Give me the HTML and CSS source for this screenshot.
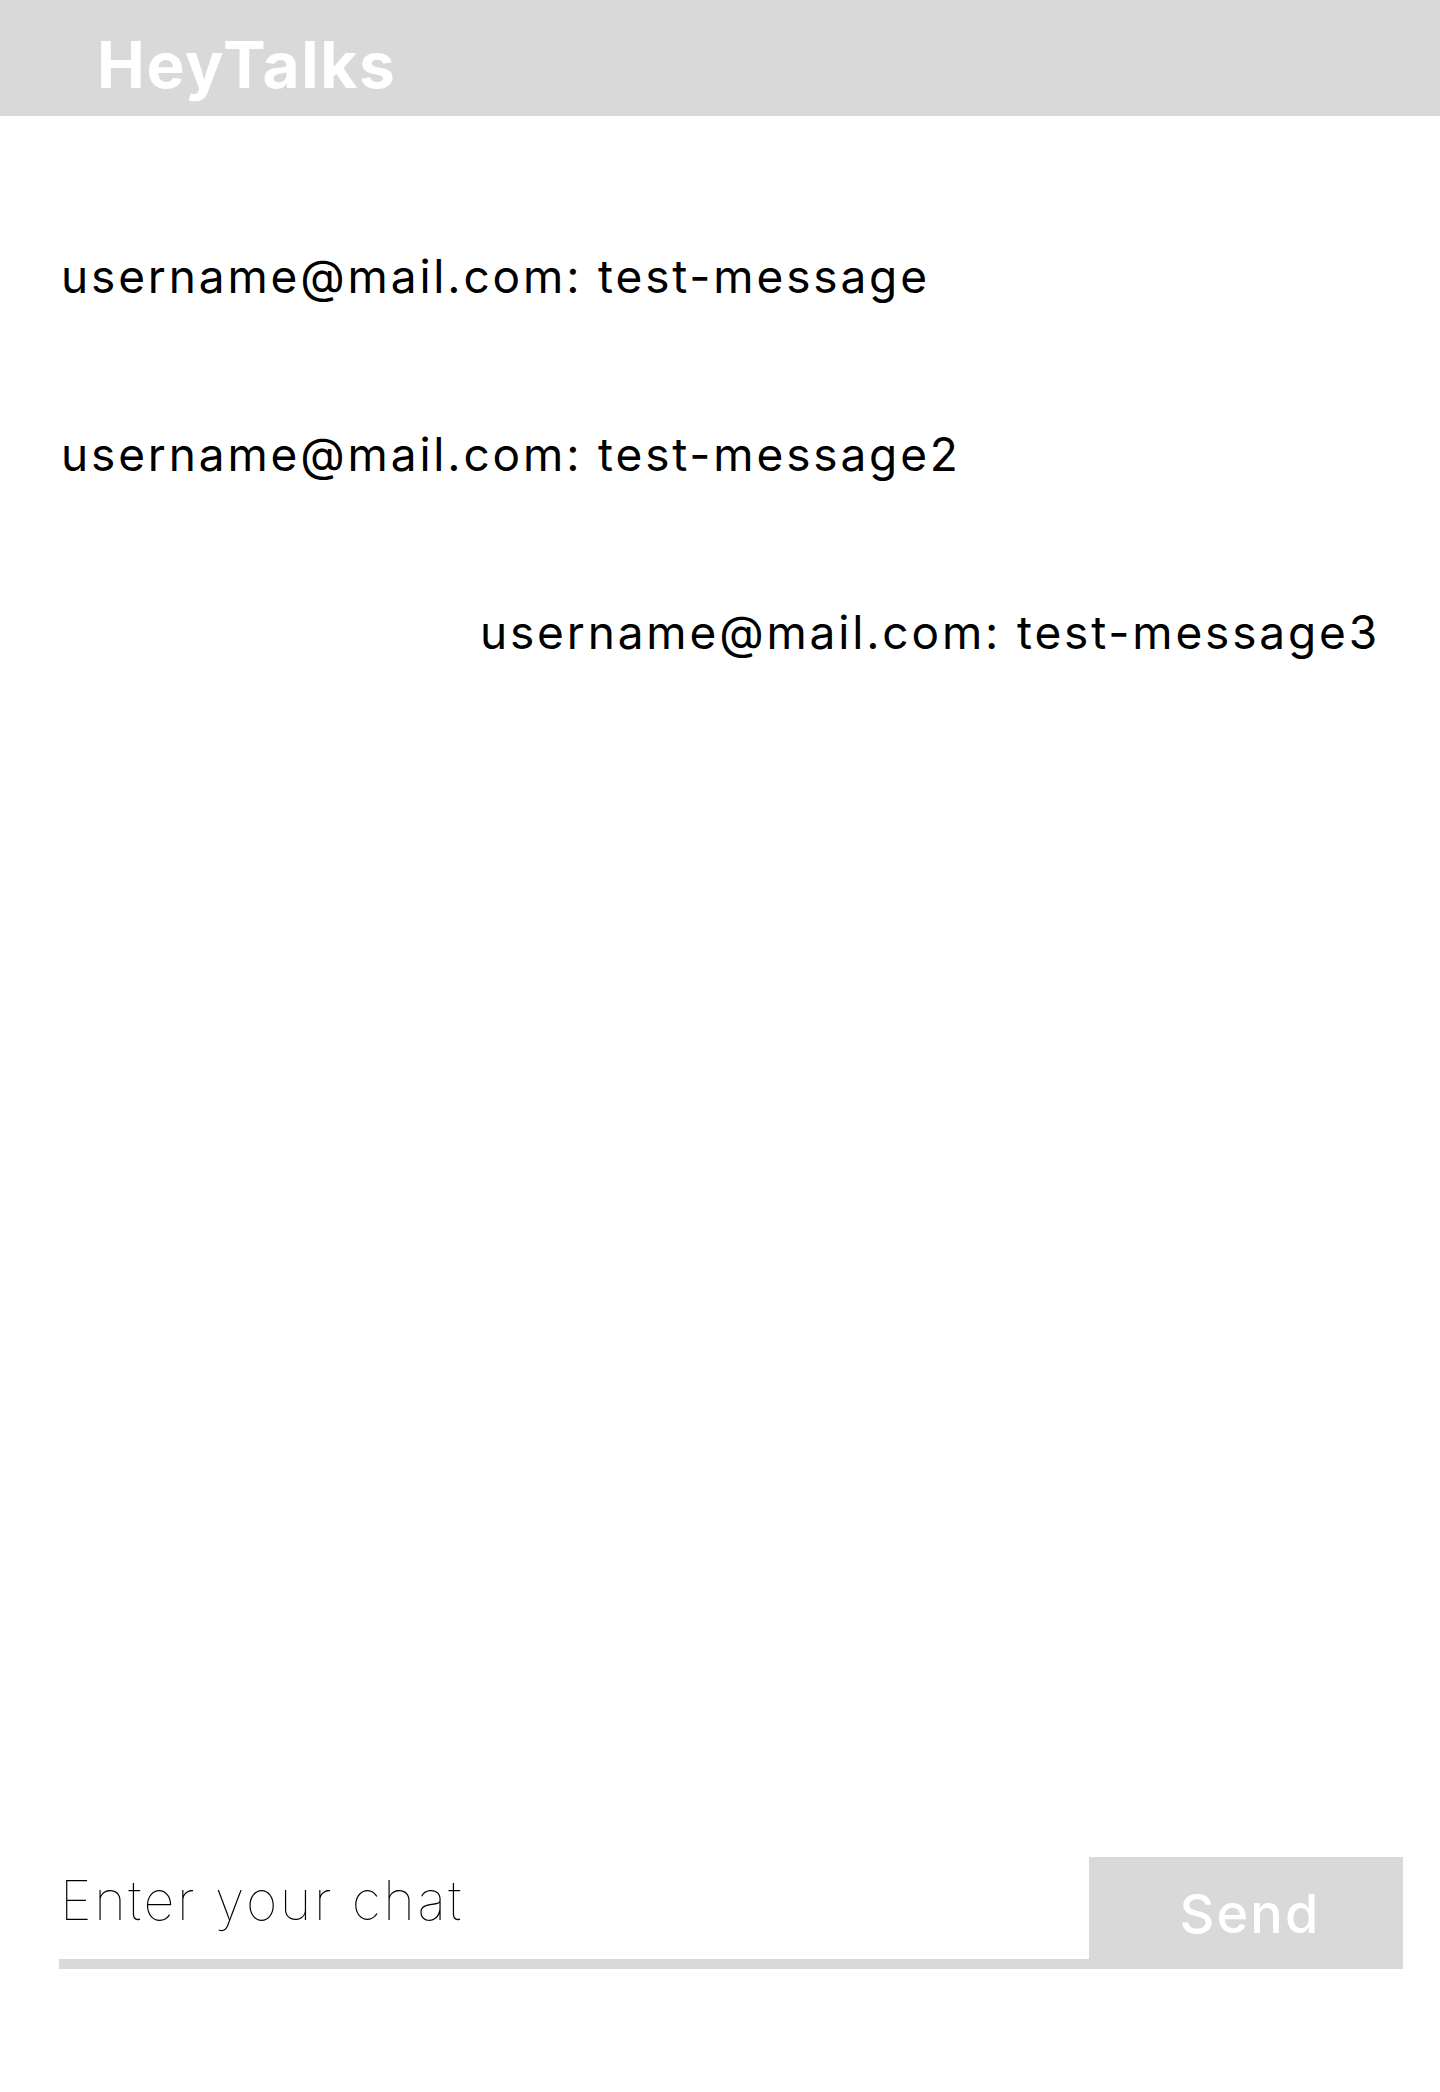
FILE: index.html
```html
<!DOCTYPE html>
<html lang="en">
<head>
<meta charset="utf-8">
<title>HeyTalks</title>
<link rel="stylesheet" href="styles.css">
</head>
<body>
<div class="app">
  <header class="topbar">
    <h1 class="brand">HeyTalks</h1>
  </header>
  <main class="messages">
    <p class="msg">username@mail.com: test-message</p>
    <p class="msg">username@mail.com: test-message2</p>
    <p class="msg msg-own">username@mail.com: test-message3</p>
  </main>
  <form class="composer" onsubmit="return false;">
    <input class="chat-input" type="text" placeholder="Enter your chat">
    <button class="send-btn" type="submit">Send</button>
  </form>
</div>
</body>
</html>
```

FILE: styles.css
```css
* { box-sizing: border-box; }
html, body { margin: 0; padding: 0; background: #ffffff; }
body { font-family: Inter, "Noto Sans", sans-serif; color: #000; }

.app {
  display: flex;
  flex-direction: column;
  min-height: 2092px;
}

.topbar {
  background: #d9d9d9;
  height: 116px;
  padding: 33px 0 0 97px;
}
.brand {
  margin: 0;
  font-size: 64px;
  line-height: 64px;
  font-weight: 700;
  color: #ffffff;
  letter-spacing: 0.025em;
}

.messages {
  flex: 1;
  display: flex;
  flex-direction: column;
  gap: 130px;
  padding: 136px 60px 0 61px;
}
.msg {
  margin: 0;
  font-size: 46px;
  line-height: 48px;
  letter-spacing: 0.062em;
}
.msg-own { align-self: flex-end; }

.composer {
  display: flex;
  align-items: flex-end;
  margin: 0 37px 123px 59px;
}
.chat-input {
  flex: 1;
  height: 101px;
  border: 0;
  border-bottom: 10px solid #d9d9d9;
  outline: none;
  padding: 0 0 26px 1px;
  font-family: Inter, sans-serif;
  font-size: 54px;
  font-weight: 100;
  letter-spacing: 0.048em;
  background: transparent;
}
.chat-input::placeholder { color: #000; opacity: 1; }
.send-btn {
  width: 314px;
  height: 112px;
  border: 0;
  background: #d9d9d9;
  color: #ffffff;
  font-family: Inter, sans-serif;
  font-size: 54px;
  font-weight: 500;
  letter-spacing: 0.04em;
  padding: 0 0 0 8px;
}
```
